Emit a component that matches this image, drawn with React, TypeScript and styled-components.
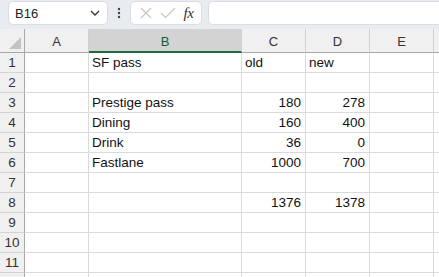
import { Fragment } from 'react'
import styled, { createGlobalStyle } from 'styled-components'

const GlobalStyle = createGlobalStyle`
  html, body {
    margin: 0;
    padding: 0;
    background: #ffffff;
    overflow: hidden;
  }
  body {
    font-family: "Liberation Sans", Arial, sans-serif;
  }
`

const Page = styled.div`
  width: 439px;
  height: 277px;
  overflow: hidden;
  background: #ffffff;
`

const Toolbar = styled.div`
  height: 29px;
  box-sizing: border-box;
  background: #e8ecf0;
  display: flex;
  align-items: flex-start;
  padding: 1px 0 0 8px;
`

const NameBox = styled.div`
  width: 100px;
  height: 24px;
  box-sizing: border-box;
  background: #ffffff;
  border: 1px solid #d9dde1;
  border-radius: 5px;
  display: flex;
  align-items: center;
  justify-content: space-between;
  padding: 0 6px;
  font-size: 13px;
  color: #222;
`

const Dots = styled.div`
  width: 22px;
  height: 24px;
  display: flex;
  align-items: center;
  justify-content: center;
`

const FormulaButtons = styled.div`
  width: 72px;
  height: 24px;
  box-sizing: border-box;
  background: #ffffff;
  border: 1px solid #d9dde1;
  border-radius: 5px;
  display: flex;
  align-items: center;
  justify-content: space-around;
  padding: 0 4px;
`

const Fx = styled.span`
  font-family: "Liberation Serif", "Times New Roman", serif;
  font-style: italic;
  font-size: 15px;
  color: #333;
  letter-spacing: -0.5px;
`

const FormulaInput = styled.div`
  flex: 1;
  height: 24px;
  margin-left: 6px;
  box-sizing: border-box;
  background: #ffffff;
  border: 1px solid #d9dde1;
  border-right: none;
  border-radius: 5px 0 0 5px;
`

const Grid = styled.div`
  display: grid;
  grid-template-columns: 25px 64px 153px 64px 64px 64px 1fr;
  grid-template-rows: 24px;
  grid-auto-rows: 20px;
`

const ColHeader = styled.div<{ $active?: boolean }>`
  box-sizing: border-box;
  background: ${p => (p.$active ? '#d3d3d3' : '#f0f0f0')};
  border-right: 1px solid #d0d0d0;
  border-bottom: ${p => (p.$active ? '2px solid #1e6b41' : '1px solid #a8a8a8')};
  display: flex;
  align-items: center;
  justify-content: center;
  padding-top: 2px;
  font-size: 13px;
  color: ${p => (p.$active ? '#145c36' : '#333')};
`

const Corner = styled.div`
  box-sizing: border-box;
  background: #f0f0f0;
  border-right: 1px solid #a8a8a8;
  border-bottom: 1px solid #a8a8a8;
  display: flex;
  align-items: flex-end;
  justify-content: flex-end;
  padding: 0 3px 3px 0;
`

const RowHeader = styled.div`
  box-sizing: border-box;
  background: #f0f0f0;
  border-right: 1px solid #a8a8a8;
  border-bottom: 1px solid #d4d4d4;
  display: flex;
  align-items: flex-end;
  justify-content: center;
  padding-bottom: 2px;
  font-size: 13.5px;
  color: #333;
`

const Cell = styled.div<{ $num?: boolean }>`
  box-sizing: border-box;
  border-right: 1px solid #dadada;
  border-bottom: 1px solid #dadada;
  display: flex;
  align-items: flex-end;
  justify-content: ${p => (p.$num ? 'flex-end' : 'flex-start')};
  padding: 0 4px 2px 3px;
  font-size: 13.5px;
  color: #111;
  white-space: nowrap;
`

const columns = ['A', 'B', 'C', 'D', 'E', '']

const rows: (string | number)[][] = [
  ['', 'SF pass', 'old', 'new', '', ''],
  ['', '', '', '', '', ''],
  ['', 'Prestige pass', 180, 278, '', ''],
  ['', 'Dining', 160, 400, '', ''],
  ['', 'Drink', 36, 0, '', ''],
  ['', 'Fastlane', 1000, 700, '', ''],
  ['', '', '', '', '', ''],
  ['', '', 1376, 1378, '', ''],
  ['', '', '', '', '', ''],
  ['', '', '', '', '', ''],
  ['', '', '', '', '', ''],
  ['', '', '', '', '', ''],
]

const App = () => {
  return (
    <Page>
      <GlobalStyle />
      <Toolbar>
        <NameBox>
          <span>B16</span>
          <svg width="12" height="12" viewBox="0 0 12 12">
            <path d="M2 4 L6 8 L10 4" fill="none" stroke="#333" strokeWidth="1.3" />
          </svg>
        </NameBox>
        <Dots>
          <svg width="4" height="14" viewBox="0 0 4 14">
            <circle cx="2" cy="3" r="1.2" fill="#444" />
            <circle cx="2" cy="7" r="1.2" fill="#444" />
            <circle cx="2" cy="11" r="1.2" fill="#444" />
          </svg>
        </Dots>
        <FormulaButtons>
          <svg width="14" height="14" viewBox="0 0 14 14">
            <path d="M2 2 L12 12 M12 2 L2 12" stroke="#c4c4c4" strokeWidth="1.1" fill="none" />
          </svg>
          <svg width="16" height="14" viewBox="0 0 16 14">
            <path d="M1 7 L5.5 11.5 L15 2" stroke="#c4c4c4" strokeWidth="1.1" fill="none" />
          </svg>
          <Fx>fx</Fx>
        </FormulaButtons>
        <FormulaInput />
      </Toolbar>
      <Grid>
        <Corner>
          <svg width="12" height="12" viewBox="0 0 12 12">
            <path d="M12 0 L12 12 L0 12 Z" fill="#c3c3c3" />
          </svg>
        </Corner>
        {columns.map((c, i) => (
          <ColHeader key={i} $active={c === 'B'}>
            {c}
          </ColHeader>
        ))}
        {rows.map((r, ri) => (
          <Fragment key={ri}>
            {/* row 12 sits below the window edge; its number isn't visible */}
            <RowHeader>{ri < 11 ? ri + 1 : ''}</RowHeader>
            {r.map((v, ci) => (
              <Cell key={ci} $num={typeof v === 'number'}>
                {v}
              </Cell>
            ))}
          </Fragment>
        ))}
      </Grid>
    </Page>
  )
}

export default App
